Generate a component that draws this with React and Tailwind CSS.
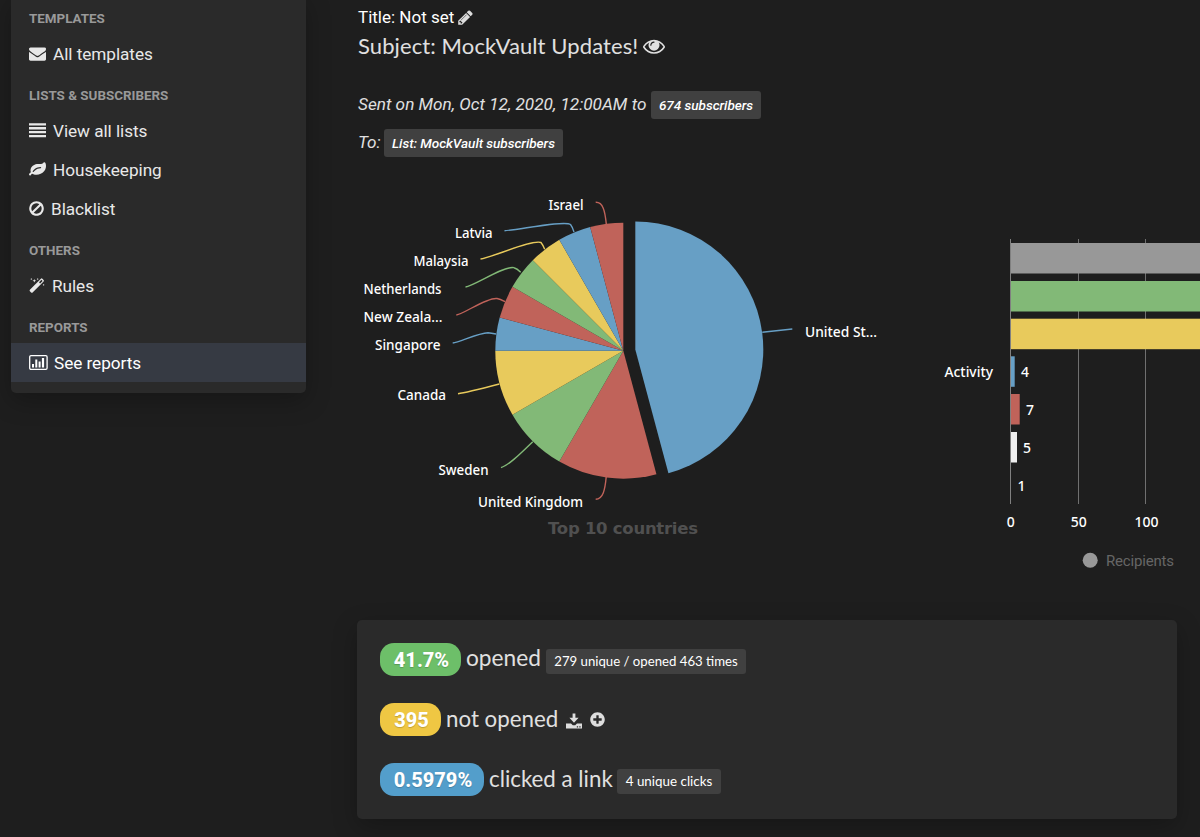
import React from 'react';
import { FaPlusCircle } from 'react-icons/fa';

const ENVELOPE = "M1792 710v794q0 66-47 113t-113 47h-1472q-66 0-113-47t-47-113v-794q44 49 101 87 362 246 497 345 57 42 92.500 65.500t94.500 48 110 24.500h2q51 0 110-24.500t94.500-48 92.500-65.500q170-123 498-345 57-39 100-87zm0-294q0 79-49 151t-122 123q-376 261-468 325-10 7-42.500 31t-54 38.500-52 32.500-57.500 27-50 9h-2q-23 0-50-9t-57.500-27-52-32.500-54-38.500-42.500-31q-91-64-262-182.500t-205-142.500q-62-42-117-115.500t-55-136.500q0-78 41.500-130t118.500-52h1472q65 0 112.500 47t47.500 113z";
const LEAF = "M1280 704q0-26-19-45t-45-19q-172 0-318 49.500t-259.500 134-235.500 219.500q-19 21-19 45 0 26 19 45t45 19q24 0 45-19 27-24 74-71t67-66q137-124 268.500-176t313.500-52q26 0 45-19t19-45zm512-198q0 95-20 193-46 224-184.500 383t-357.500 268q-214 108-438 108-148 0-286-47-15-5-88-42t-96-37q-16 0-39.500 32t-45 70-52.500 70-60 32q-43 0-63.500-17.500t-45.500-59.500q-2-4-6-11t-5.500-10-3-9.500-1.500-13.500q0-35 31-73.500t68-65.500 68-56 31-48q0-4-14-38t-16-44q-9-51-9-104 0-115 43.500-220t119-184.500 170.500-139 204-95.500q55-18 145-25.500t179.500-9 178.500-6 163.500-24 113.500-56.500l29.500-29.500 29.500-28 27-20 36.500-16 43.500-4.500q39 0 70.500 46t47.500 112 24 124 8 96z";
const BAN = "M1440 893q0-161-87-295l-754 753q137 89 297 89 111 0 211.500-43.500t173.500-116.500 116-174.500 43-212.500zm-999 299l755-754q-135-91-300-91-148 0-273 73t-198 199-73 274q0 162 89 299zm1223-299q0 157-61 300t-163.500 246-245 164-298.500 61-298.500-61-245-164-163.500-246-61-300 61-299.500 163.500-245.500 245-164 298.500-61 298.500 61 245 164 163.500 245.500 61 299.500z";
const PENCIL = "M491 1536l91-91-235-235-91 91v107h128v128h107zm523-928q0-22-22-22-10 0-17 7l-542 542q-7 7-7 17 0 22 22 22 10 0 17-7l542-542q7-7 7-17zm-54-192l416 416-832 832h-416v-416zm683 96q0 53-37 90l-166 166-416-416 166-165q36-38 90-38 53 0 91 38l235 234q37 39 37 91z";
const EYE = "M1664 960q-152-236-381-353 61 104 61 225 0 185-131.500 316.500t-316.500 131.500-316.500-131.500-131.500-316.500q0-121 61-225-229 117-381 353 133 205 333.500 326.500t434.500 121.500 434.500-121.500 333.500-326.500zm-720-384q0-20-14-34t-34-14q-125 0-214.500 89.500t-89.500 214.500q0 20 14 34t34 14 34-14 14-34q0-86 61-147t147-61q20 0 34-14t14-34zm848 384q0 34-20 69-140 230-376.500 368.500t-499.500 138.500-499.500-139-376.500-368q-20-35-20-69t20-69q140-229 376.500-368t499.500-139 499.500 139 376.500 368q20 35 20 69z";

function Glyph({ d, className, viewBox = "0 0 1792 1792" }) {
  return (
    <svg viewBox={viewBox} className={className} fill="currentColor">
      <path d={d} />
    </svg>
  );
}

const icons = {
  envelope: <Glyph d={ENVELOPE} className="w-[17px] h-[17px]" />,
  list: <Glyph d="M0 1.200h17v2.300H0zM0 5.100h17v2.300H0zM0 9h17v2.300H0zM0 12.900h17v2.300H0z" viewBox="0 0 17 17" className="w-[17px] h-[17px]" />,
  leaf: <Glyph d={LEAF} className="w-[17px] h-[17px]" />,
  ban: <Glyph d={BAN} viewBox="128 0 1536 1792" className="w-[15px] h-[17px]" />,
  magic: (
    <svg viewBox="0 0 16 17" className="w-4 h-[17px]" fill="currentColor">
      <path d="M.9 12.700 11.900 1.700q.7-.7 1.500 0l1.200 1.200q.7.7 0 1.500L3.600 15.400q-.7.7-1.500 0L.9 14.200q-.7-.8 0-1.500zM10 5.300l1.100 1.100 2.500-2.500-1.100-1.100z" fillRule="evenodd" />
      <path d="M5.300 1.900l.5 1.300 1.300.5-1.300.5-.5 1.300-.5-1.300-1.300-.5 1.300-.5zM2.300 1.100l.3.700.7.300-.7.300-.3.700-.3-.7-.7-.3.700-.3zM8.700 1.100l.3.700.7.300-.7.300-.3.700-.3-.7-.7-.3.700-.3zM14.600 6.900l.3.700.7.300-.7.300-.3.700-.3-.7-.7-.3.700-.3z" />
    </svg>
  ),
  chart: (
    <svg viewBox="0 0 19 17" className="w-[19px] h-[17px]">
      <rect x=".7" y="1.700" width="17.400" height="13.600" rx="1.300" fill="none" stroke="currentColor" strokeWidth="1.300" />
      <path d="M3 10h2v3.500H3zM6.300 5.500h2v8h-2zM9.600 7.500h2v6h-2zM12.900 4h2.200v9.500h-2.200z" fill="currentColor" />
    </svg>
  ),
};

const menu = [
  { title: "TEMPLATES", items: [{ icon: "envelope", label: "All templates", gap: "gap-[7px]" }] },
  {
    title: "LISTS & SUBSCRIBERS",
    items: [
      { icon: "list", label: "View all lists", gap: "gap-[7px]" },
      { icon: "leaf", label: "Housekeeping", gap: "gap-[7px]" },
      { icon: "ban", label: "Blacklist", gap: "gap-[7px]" },
    ],
  },
  { title: "OTHERS", items: [{ icon: "magic", label: "Rules", gap: "gap-[7px]" }] },
  { title: "REPORTS", items: [{ icon: "chart", label: "See reports", gap: "gap-1.5", active: true }] },
];

function Sidebar() {
  return (
    <aside className="w-[295px] h-[397px] -mt-1 ml-[11px] shrink-0 bg-[#2a2a2a] rounded-b-[5px] shadow-[0_8px_24px_rgba(0,0,0,0.25)]">
      {menu.map((section) => (
        <div key={section.title}>
          <h3 className="h-[38px] flex items-center pl-[18px] pt-[9px] text-[13.4px] font-bold text-[#999]">
            {section.title}
          </h3>
          {section.items.map((item) => (
            <a
              key={item.label}
              className={`flex items-center h-[39px] pl-[18px] text-[17.2px] tracking-[-0.05px] ${item.gap} ${item.active ? "bg-[#363a43] text-white" : "text-[#e8e8e8]"}`}
            >
              {icons[item.icon]}
              <span className="pt-0.5">{item.label}</span>
            </a>
          ))}
        </div>
      ))}
    </aside>
  );
}

const BLUE = "#679fc5";
const RED = "#c0635a";
const GREEN = "#82b977";
const YELLOW = "#e8ca5c";

// lx/ly is where the label starts, w its drawn width
const countries = [
  { name: "United St...", share: 11, color: BLUE, lx: 805, ly: 337, w: 72, line: "M762.300 332.300L792.300 329" },
  { name: "United Kingdom", share: 3, color: RED, lx: 478, ly: 506.5, w: 105, line: "M595.700 499.300C603 499 605 490 606.200 477" },
  { name: "Sweden", share: 2, color: GREEN, lx: 438.500, ly: 474.500, w: 50, line: "M501 467.700C509 465 520 454 532.700 441.700" },
  { name: "Canada", share: 2, color: YELLOW, lx: 397.500, ly: 400, w: 48.500, line: "M458 393.700C464 393 484 388 499.300 384" },
  { name: "Singapore", share: 1, color: BLUE, lx: 375, ly: 350, w: 65.500, line: "M452.700 343C460 342 478 333 488 332.700Q491 333 496 334" },
  { name: "New Zeala...", share: 1, color: RED, lx: 363.500, ly: 322, w: 79, line: "M456.300 315C464 314 487 297 497 298.500Q500 299 505 301.700" },
  { name: "Netherlands", share: 1, color: GREEN, lx: 363.500, ly: 294, w: 78, line: "M465.500 287C474 286 505 265 514 267.700Q517 268.500 520.700 272.300" },
  { name: "Malaysia", share: 1, color: YELLOW, lx: 413.500, ly: 266, w: 55, line: "M480.500 259C491 258 532 239 541 242.500Q543 245 544.700 249.300" },
  { name: "Latvia", share: 1, color: BLUE, lx: 455, ly: 238, w: 37.500, line: "M504.500 230.700C518 230 565 220 570.500 224.500Q572.500 227 574 232" },
  { name: "Israel", share: 1, color: RED, lx: 548.500, ly: 210, w: 35, line: "M595.700 202.300C603 202 605 211 606.300 224" },
];

function wedge(cx, cy, r, from, to) {
  const point = (deg) => {
    const a = (deg * Math.PI) / 180;
    return `${cx + r * Math.sin(a)} ${cy - r * Math.cos(a)}`;
  };
  return `M${cx} ${cy}L${point(from)}A${r} ${r} 0 0 1 ${point(to)}Z`;
}

function CountriesChart() {
  let angle = 0;
  return (
    <svg viewBox="357 180 543 420" className="w-[543px] h-[420px] shrink-0 font-['Noto_Sans',sans-serif]">
      {countries.map((c, i) => {
        const from = angle;
        angle += c.share * 15;
        return (
          <g key={c.name}>
            <path
              d={i === 0 ? wedge(635.3, 349.5, 128, from, angle) : wedge(623.3, 350.7, 128, from, angle)}
              fill={c.color}
            />
            <path d={c.line} fill="none" stroke={c.color} strokeWidth="1.400" />
            <text x={c.lx} y={c.ly} textLength={c.w} lengthAdjust="spacingAndGlyphs" fill="#fff" fontSize="14" fontWeight="500">
              {c.name}
            </text>
          </g>
        );
      })}
      <text x="548" y="534" textLength="150" fill="#505050" fontSize="16.500" fontWeight="700" className="font-['DejaVu_Sans',sans-serif]">
        Top 10 countries
      </text>
    </svg>
  );
}

const bars = [
  { color: "#989898", y: 243, w: 190 },
  { color: GREEN, y: 281, w: 190 },
  { color: YELLOW, y: 318.7, w: 190 },
  { color: BLUE, y: 356.3, w: 4, value: 4, x: 1021 },
  { color: RED, y: 394, w: 9, value: 7, x: 1026 },
  { color: "#eee", y: 432, w: 6.3, value: 5, x: 1023 },
  { color: "none", y: 469.7, w: 1, value: 1, x: 1017.5 },
];

function ActivityChart() {
  return (
    <svg viewBox="900 180 300 420" className="w-[300px] h-[420px] shrink-0 font-['Noto_Sans',sans-serif]" fill="#fff" fontSize="14" fontWeight="500">
      <path d="M1078.500 239V504M1145.500 239V504" stroke="#707070" />
      {bars.map((b) => (
        <g key={b.y}>
          <rect x="1010.700" y={b.y} width={b.w} height="30.500" fill={b.color} />
          {b.value && <text x={b.x} y={b.y + 21}>{b.value}</text>}
        </g>
      ))}
      <path d="M1010.500 239V504" stroke="#808080" />
      <text x="944.500" y="377" textLength="48.500" lengthAdjust="spacingAndGlyphs">Activity</text>
      <text x="1010.800" y="527" textAnchor="middle">0</text>
      <text x="1078.800" y="527" textAnchor="middle">50</text>
      <text x="1146.500" y="527" textAnchor="middle">100</text>
      <circle cx="1090.200" cy="560.300" r="7.500" fill="#989898" />
      <text x="1106" y="566" textLength="68" fill="#666" fontSize="15" fontWeight="400" className="font-[Roboto,sans-serif]">
        Recipients
      </text>
    </svg>
  );
}

function Stat({ value, color, width, label, labelWidth, children }) {
  return (
    <div className="flex items-center h-[33px]">
      <span className={`flex items-center justify-center h-[33px] pl-0.5 rounded-[14px] text-[20px] font-extrabold text-white [text-shadow:0_1px_1px_rgba(0,0,0,0.2)] ${color} ${width}`}>
        {value}
      </span>
      <span className={`ml-[5px] -mt-0.5 text-[#e0e0e0] whitespace-nowrap font-[Lato,sans-serif] ${labelWidth}`}>{label}</span>
      {children}
    </div>
  );
}

export default function App() {
  return (
    <div className="flex w-[1200px] h-[837px] overflow-hidden bg-[#1e1e1e] font-[Roboto,sans-serif]">
      <Sidebar />
      <main className="ml-[51px] w-[843px] shrink-0">
        <header className="h-[180px] pl-px">
          <p className="flex items-center h-[35px] gap-1 text-[17px] text-white">
            <span>Title: Not set</span>
            <Glyph d={PENCIL} viewBox="128 0 1536 1792" className="w-[15px] h-[17px] text-[#ddd]" />
          </p>
          <h2 className="flex items-center h-6 gap-[5px] text-[22px] text-[#e0e0e0] font-[Lato,sans-serif]">
            <span className="w-[280px] -mt-1 whitespace-nowrap tracking-[0.1px]">Subject: MockVault Updates!</span>
            <Glyph d={EYE} className="w-[22px] h-[22px] -mt-0.5" />
          </h2>
          <p className="flex items-center h-7 mt-8 text-[17.2px] italic text-[#e0e0e0]">
            <span className="w-[293px] whitespace-nowrap -mt-px">Sent on Mon, Oct 12, 2020, 12:00AM to</span>
            <span className="flex items-center justify-center w-[110px] h-7 rounded-[3px] bg-[#404040] text-[13.6px] tracking-[-0.05px] font-medium text-white">674 subscribers</span>
          </p>
          <p className="flex items-center h-7 mt-2.5 text-[17.2px] italic text-[#e0e0e0]">
            <span className="w-[26px] -mt-px">To:</span>
            <span className="flex items-center justify-center w-[179px] h-7 rounded-[3px] bg-[#404040] text-[13.6px] tracking-[-0.05px] font-medium text-white">List: MockVault subscribers</span>
          </p>
        </header>

        <div className="flex h-[440px]">
          <CountriesChart />
          <ActivityChart />
        </div>

        <section className="flex flex-col gap-[27px] w-[820px] h-[199px] pt-[23px] pl-[23px] rounded-[5px] bg-[#2a2a2a] shadow-[0_8px_24px_rgba(0,0,0,0.25)]">
          <Stat value="41.7%" color="bg-[#6dbf69]" width="w-[81px]" label="opened" labelWidth="w-[75px] text-[22.7px]">
            <span className="flex items-center justify-center ml-[5px] mt-1 w-[200px] h-[25px] rounded-[3px] bg-[#404040] text-[13.2px] text-white font-[Lato,sans-serif]">279 unique / opened 463 times</span>
          </Stat>
          <Stat value="395" color="bg-[#efc743]" width="w-[61px]" label="not opened" labelWidth="w-[112px] text-[22.3px]">
            <svg viewBox="0 0 16 16" className="w-4 h-4 ml-2 mt-0.5 text-[#ddd]" fill="currentColor">
              <path d="M6.600.5h2.800v4.300h3.200L8 9.800 3.400 4.800h3.200z" />
              <path d="M0 10.600h5l1.800 1.600h2.400l1.800-1.600h5v5H0zM10.800 13.200v1.200h1.300v-1.200zM13.300 13.200v1.200h1.300v-1.200z" fillRule="evenodd" />
            </svg>
            <FaPlusCircle className="w-[15px] h-[15px] ml-[8px] text-[#ddd]" />
          </Stat>
          <Stat value="0.5979%" color="bg-[#539ecb]" width="w-[104px]" label="clicked a link" labelWidth="w-[124px] text-[22.3px]">
            <span className="flex items-center justify-center ml-[4px] mt-1 w-[104px] h-[25px] rounded-[3px] bg-[#404040] text-[13.4px] text-white font-[Lato,sans-serif]">4 unique clicks</span>
          </Stat>
        </section>
      </main>
    </div>
  );
}
